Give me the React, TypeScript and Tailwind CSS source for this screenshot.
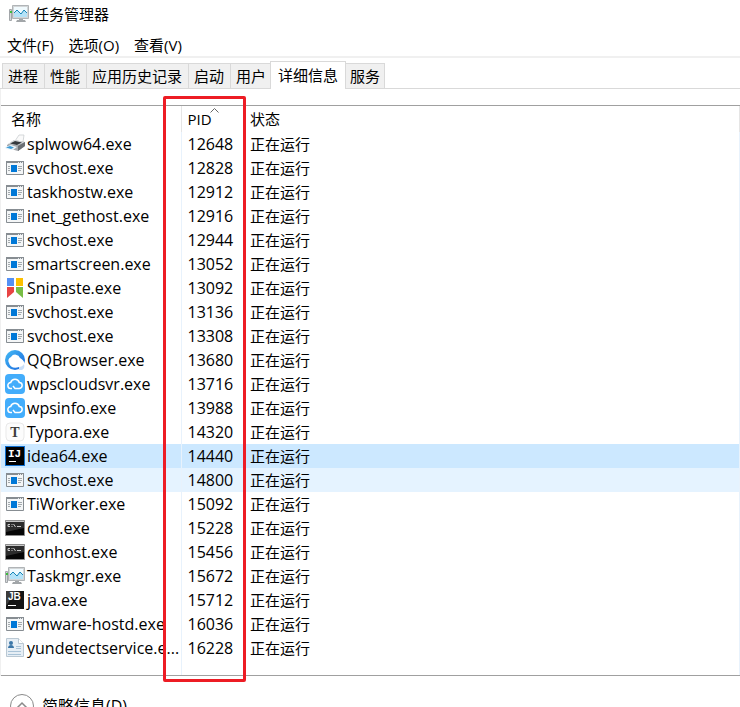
import type { ReactNode } from 'react';
import clsx from 'clsx';

const menus = ['文件(F)', '选项(O)', '查看(V)'];
const tabs = ['进程', '性能', '应用历史记录', '启动', '用户', '详细信息', '服务'];

type IconName =
  | 'printer' | 'app' | 'snipaste' | 'qq' | 'cloud' | 'typora'
  | 'idea' | 'console' | 'taskmgr' | 'jb' | 'contact';

const processes: { name: string; pid: number; icon: IconName }[] = [
  { name: 'splwow64.exe', pid: 12648, icon: 'printer' },
  { name: 'svchost.exe', pid: 12828, icon: 'app' },
  { name: 'taskhostw.exe', pid: 12912, icon: 'app' },
  { name: 'inet_gethost.exe', pid: 12916, icon: 'app' },
  { name: 'svchost.exe', pid: 12944, icon: 'app' },
  { name: 'smartscreen.exe', pid: 13052, icon: 'app' },
  { name: 'Snipaste.exe', pid: 13092, icon: 'snipaste' },
  { name: 'svchost.exe', pid: 13136, icon: 'app' },
  { name: 'svchost.exe', pid: 13308, icon: 'app' },
  { name: 'QQBrowser.exe', pid: 13680, icon: 'qq' },
  { name: 'wpscloudsvr.exe', pid: 13716, icon: 'cloud' },
  { name: 'wpsinfo.exe', pid: 13988, icon: 'cloud' },
  { name: 'Typora.exe', pid: 14320, icon: 'typora' },
  { name: 'idea64.exe', pid: 14440, icon: 'idea' },
  { name: 'svchost.exe', pid: 14800, icon: 'app' },
  { name: 'TiWorker.exe', pid: 15092, icon: 'app' },
  { name: 'cmd.exe', pid: 15228, icon: 'console' },
  { name: 'conhost.exe', pid: 15456, icon: 'console' },
  { name: 'Taskmgr.exe', pid: 15672, icon: 'taskmgr' },
  { name: 'java.exe', pid: 15712, icon: 'jb' },
  { name: 'vmware-hostd.exe', pid: 16036, icon: 'app' },
  { name: 'yundetectservice.e...', pid: 16228, icon: 'contact' },
];

const SELECTED_PID = 14440;
const HOVERED_PID = 14800;

// All drawings use a 20x20 grid
const drawings: Record<IconName, ReactNode> = {
  printer: (
    <>
      <path d="M10 7 14 1 19 1 18 8Z" fill="#fafafa" stroke="#c4c8cc" strokeWidth=".7" />
      <path d="M2 11 9 6 20 8 20 12 13 17 2 14Z" fill="#a4a8ac" />
      <path d="M3 10 9 6 20 8 13 11Z" fill="#d9dcde" />
      <path d="M5 9.500 10 7 17 8.500 12 11Z" fill="#35393d" />
      <path d="M13 12 20 8v4l-7 5Z" fill="#6a6f74" />
      <path d="M0 13 6 11 12 13 8 16 1 15Z" fill="#e9f3fa" />
      <path d="M1 13.500 5 12 9 13.500 6 15Z" fill="#3c9bd6" />
    </>
  ),
  app: (
    <>
      <path d="M1.500 3.500h17v13h-17z" fill="#f4f6f7" stroke="#878d92" />
      <path d="M1 3h18v2H1z" fill="#878d92" />
      <path d="M13 4h1v1h-1zM15 4h1v1h-1zM17 4h1v1h-1z" fill="#e9ecee" />
      <path d="M6 7h6v7H6z" fill="#0078d7" />
      <path d="M3 8.500h2M3 10.500h2M3 12.500h2M13 8.500h4M13 10.500h4M13 12.500h3" stroke="#a3a9ad" />
    </>
  ),
  snipaste: (
    <>
      <path d="M2 0h7v8H2z" fill="#5490f5" />
      <path d="M11 0h7v8h-7z" fill="#fdc000" />
      <path d="M2 9h7v5l-7 6z" fill="#e84444" />
      <path d="M11 9h7v11l-7-6z" fill="#78bd45" />
    </>
  ),
  qq: (
    <>
      <defs>
        <linearGradient id="qq-ring" x1="0" y1="0" x2="1" y2="1">
          <stop offset="0" stopColor="#46bdf6" />
          <stop offset="1" stopColor="#1764dc" />
        </linearGradient>
      </defs>
      <circle cx="10" cy="10" r="10" fill="url(#qq-ring)" />
      <path d="M4 13a4 4 0 0 1 2-6 5 5 0 0 1 9 1c2 1 4 3 5 6v6h-5l-1-3c-5 2-9 0-10-4Z" fill="#fff" />
      <path d="M14 17c2 0 4-1 5-3 1 3 0 5-2 6h-3Z" fill="#c9dff8" />
    </>
  ),
  cloud: (
    <>
      <rect width="20" height="20" rx="4" fill="#43adfb" />
      <path
        d="M8 12l2 2.500h4a3 3 0 0 0 .3-6 4.500 4.500 0 0 0-8.600 0A3 3 0 0 0 6 14.500h1"
        fill="none"
        stroke="#fff"
        strokeWidth="1.500"
      />
    </>
  ),
  typora: (
    <>
      <rect x="1" y="1" width="18" height="18" rx="4" fill="#fcfcfc" stroke="#e9e9e9" />
      <text x="10" y="15" textAnchor="middle" fontSize="14" fontWeight="700" fill="#3d3d3d" fontFamily="Liberation Serif, serif">T</text>
    </>
  ),
  idea: (
    <>
      <rect width="20" height="20" fill="#0f6fd0" />
      <path d="M1 1h18v18H1z" fill="#000" />
      <text x="3" y="11" fontSize="11" fontWeight="700" fill="#fff" fontFamily="Liberation Mono, monospace">IJ</text>
      <path d="M4 15h7v1H4z" fill="#fff" />
    </>
  ),
  console: (
    <>
      <path d="M.5 2.500h19v15H.5z" fill="#060606" stroke="#8c8c8c" />
      <path d="M1 3h18v1H1z" fill="#c9c9c9" />
      <path d="M1 4h18v6L1 14z" fill="#2c2c2c" />
      <path d="M5 6.500H3v2h2M7 6v1M7 8v1M8.500 6l2 3M12 8.500h4" fill="none" stroke="#c8c8c8" />
    </>
  ),
  taskmgr: (
    <>
      <path d="M.5 5.500h2v11h-2z" fill="#d5d8da" stroke="#a2a6a9" />
      <path d="M1 7h2v2H1z" fill="#3dbb3d" />
      <path d="M10 15h4v1h-4zM8 16h8l1 2H7z" fill="#a2a6a9" />
      <path d="M3.500 1.500h16v13h-16z" fill="#d3d6d8" stroke="#b0b4b7" />
      <path d="M5 3h13v10H5z" fill="#f0fafe" />
      <path d="m5 9 3-3 4 4 3-4 3 3v4H5z" fill="#b5e3f8" />
      <path d="m5 9 3-3 4 4 3-4 3 3" fill="none" stroke="#1585b8" />
    </>
  ),
  jb: (
    <>
      <path d="M1 1h18v18H1z" fill="#151515" />
      <path d="M1 1h10L1 16z" fill="#3b3b3b" />
      <text x="3" y="10" fontSize="10" fontWeight="700" fill="#fff" fontFamily="Liberation Sans, sans-serif">JB</text>
      <path d="M3 15h8v1H3z" fill="#fff" />
    </>
  ),
  contact: (
    <>
      <path d="M1.500.5h12l5 5v13h-17z" fill="#e6eef5" stroke="#bac8d3" />
      <path d="M13.500.5v5h5" fill="#fff" stroke="#bac8d3" />
      <circle cx="6" cy="5" r="2" fill="#3b76a8" />
      <path d="M3 10c0-4 6-4 6 0z" fill="#3b76a8" />
      <path d="M11 8.500h5M11 10.500h5M3 13.500h13M3 16.500h13" stroke="#a9c3d7" />
    </>
  ),
};

function Icon({ name }: { name: IconName }) {
  return (
    <svg className="size-5 shrink-0" viewBox="0 0 20 20" aria-hidden="true">
      {drawings[name]}
    </svg>
  );
}

function TabBar() {
  return (
    <div role="tablist" className="flex h-7 items-end border-b border-[#d9d9d9] pl-0.5">
      {tabs.map((tab) => {
        const active = tab === '详细信息';
        return (
          <button
            key={tab}
            role="tab"
            aria-selected={active}
            className={clsx(
              'shrink-0 border-l border-t border-[#d9d9d9] last:border-r',
              active
                ? '-ml-0.5 -mb-px h-7 border-r bg-white px-[7px] pb-0.5'
                : 'h-[25px] bg-[#f0f0f0] pl-[5px] pr-1.5 last:border-l-0 last:px-1',
            )}
          >
            {tab}
          </button>
        );
      })}
    </div>
  );
}

function ProcessTable() {
  return (
    <table className="w-full table-fixed border-collapse text-left">
      <colgroup>
        <col className="w-[180px]" />
        <col className="w-[65px]" />
        <col />
      </colgroup>
      <thead>
        <tr className="h-[26px]">
          <th className="border-r border-[#e5e5e5] pl-2.5 font-normal">名称</th>
          <th className="relative pl-1.5 font-normal" aria-sort="ascending">
            PID
            <svg className="absolute left-7 top-0.5 h-[5px] w-[9px]" viewBox="0 0 9 5" aria-hidden="true">
              <path d="m.5 4.500 4-4 4 4" fill="none" stroke="#666" />
            </svg>
          </th>
          <th className="border-r border-[#e5e5e5] pl-1 font-normal">状态</th>
        </tr>
      </thead>
      <tbody>
        {processes.map(({ name, pid, icon }) => (
          <tr
            key={pid}
            className={clsx(
              'h-6',
              pid === SELECTED_PID && 'bg-[#cce8ff]',
              pid === HOVERED_PID && 'bg-[#e5f3ff]',
            )}
          >
            <td className="border-r border-[#e8f2fc]">
              <div className="flex h-6 items-center gap-0.5 pl-1">
                <Icon name={icon} />
                <span className="whitespace-nowrap text-base leading-6">{name}</span>
              </div>
            </td>
            <td className="pl-1.5 text-base leading-6">{pid}</td>
            <td className="border-r border-[#e8f2fc] pl-1">正在运行</td>
          </tr>
        ))}
        {/* Empty space under the last process, column lines run through it */}
        <tr className="h-[15px]" aria-hidden="true">
          <td className="border-r border-[#e8f2fc]" />
          <td />
          <td className="border-r border-[#e8f2fc]" />
        </tr>
      </tbody>
    </table>
  );
}

export default function App() {
  return (
    <div className="flex h-screen flex-col overflow-hidden bg-white font-['Open_Sans','Noto_Sans_CJK_SC',sans-serif] text-[15px] leading-6 text-black">
      <header className="flex h-[30px] shrink-0 items-center gap-[5px] pb-0.5 pl-[9px]">
        <Icon name="taskmgr" />
        <h1>任务管理器</h1>
      </header>

      <nav className="flex h-7 shrink-0 items-center gap-[15px] border-b-2 border-[#f0f0f0] pl-[7px] pt-1">
        {menus.map((label) => (
          <button key={label}>{label}</button>
        ))}
      </nav>

      <div className="shrink-0 pt-[3px]">
        <TabBar />
      </div>

      <main className="shrink-0 border-l border-[#f0f0f0] pt-4">
        <div className="relative border-y border-[#a0a0a0]">
          <ProcessTable />
          {/* Highlight around the PID column */}
          <div className="pointer-events-none absolute -bottom-[7px] -top-2.5 left-[162px] w-[83px] rounded-xs border-3 border-[#ed1c24]" />
        </div>
      </main>

      <footer className="shrink-0 pl-2.5 pt-[18px]">
        <button className="flex items-center gap-2 text-base leading-6">
          <svg className="size-6" viewBox="0 0 24 24" aria-hidden="true">
            <circle cx="12" cy="12" r="11.500" fill="#fff" stroke="#8a8a8a" />
            <path d="m7 14 5-5 5 5" fill="none" stroke="#8a8a8a" strokeWidth="1.500" />
          </svg>
          简略信息(D)
        </button>
      </footer>
    </div>
  );
}
